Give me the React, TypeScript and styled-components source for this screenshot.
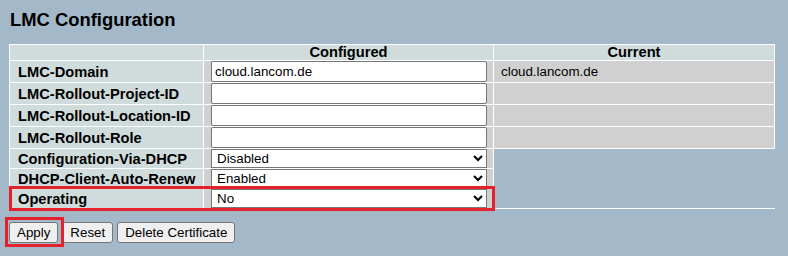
import styled, { createGlobalStyle } from "styled-components";

const GlobalStyle = createGlobalStyle`
  html, body {
    margin: 0;
    padding: 0;
    background-color: #a3b9c9;
    font-family: "Liberation Sans", Arial, sans-serif;
    color: #000;
  }
`;

const Page = styled.div`
  padding-top: 9px;
  width: 788px;
  height: 256px;
  box-sizing: border-box;
`;

const Title = styled.h1`
  margin: 0 0 14px 10px;
  font-size: 18.4px;
  line-height: 21px;
  font-weight: bold;
`;

const ConfigTable = styled.table`
  margin-left: 9px;
  border-collapse: collapse;
  width: 766px;
  table-layout: fixed;
  font-size: 14.67px;
`;

const HeadCell = styled.th`
  background-color: #d0dcdc;
  border: 1px solid #fff;
  height: 15px;
  padding: 0;
  font-weight: bold;
  line-height: 15px;
  text-align: center;
`;

const LabelCell = styled.td`
  position: relative;
  background-color: #d0dcdc;
  border: 1px solid #fff;
  padding: 0 0 0 8px;
  font-weight: bold;
  line-height: 16px;
  white-space: nowrap;
`;

const ValueCell = styled.td<{ $tall?: boolean }>`
  background-color: #d0d0d0;
  border: 1px solid #fff;
  padding: 0 0 0 7px;
  height: ${(p) => (p.$tall ? "21px" : "19px")};
  font-size: 13.33px;
  line-height: 15px;
  vertical-align: middle;
`;

const EmptyCell = styled.td<{ $last?: boolean }>`
  border: none;
  border-bottom: ${(p) => (p.$last ? "1px solid #fff" : "none")};
  padding: 0;
`;

const TextInput = styled.input`
  display: block;
  box-sizing: border-box;
  width: 276px;
  height: 21px;
  margin: 0;
  padding: 0 3px;
  border: 1px solid #767676;
  border-radius: 2px;
  background: #fff;
  font-family: "Liberation Sans", Arial, sans-serif;
  font-size: 13.33px;
  color: #000;
`;

const Select = styled.select`
  display: block;
  box-sizing: border-box;
  width: 276px;
  height: 19px;
  margin: 0;
  padding: 0 1px;
  border: 1px solid #767676;
  border-radius: 0;
  background-color: #fff;
  font-family: "Liberation Sans", Arial, sans-serif;
  font-size: 13.33px;
  color: #000;
`;

const Highlight = styled.span<{ $w: number; $h: number; $t: number; $l: number }>`
  position: absolute;
  left: ${(p) => p.$l}px;
  top: ${(p) => p.$t}px;
  width: ${(p) => p.$w}px;
  height: ${(p) => p.$h}px;
  box-sizing: border-box;
  border: 3px solid #e5222b;
  pointer-events: none;
`;

const ButtonBar = styled.div`
  display: flex;
  gap: 4px;
  margin: 13px 0 0 9px;
`;

const ButtonWrap = styled.span`
  position: relative;
  display: inline-flex;
`;

const Button = styled.button`
  height: 21px;
  padding: 0 7px;
  border: 1px solid #767676;
  border-radius: 3px;
  background-color: #efefef;
  font-family: "Liberation Sans", Arial, sans-serif;
  font-size: 13.33px;
  color: #000;
`;

const textRows = [
  { label: "LMC-Domain", value: "cloud.lancom.de", current: "cloud.lancom.de" },
  { label: "LMC-Rollout-Project-ID", value: "", current: "" },
  { label: "LMC-Rollout-Location-ID", value: "", current: "" },
  { label: "LMC-Rollout-Role", value: "", current: "" },
];

const selectRows = [
  { label: "Configuration-Via-DHCP", value: "Disabled", options: ["Disabled", "Enabled"] },
  { label: "DHCP-Client-Auto-Renew", value: "Enabled", options: ["Disabled", "Enabled"] },
  { label: "Operating", value: "No", options: ["No", "Yes"], marked: true },
];

export default function App() {
  return (
    <>
      <GlobalStyle />
      <Page>
        <Title>LMC Configuration</Title>
        <ConfigTable>
          <colgroup>
            <col style={{ width: 194 }} />
            <col style={{ width: 290 }} />
            <col />
          </colgroup>
          <thead>
            <tr>
              <HeadCell />
              <HeadCell>Configured</HeadCell>
              <HeadCell>Current</HeadCell>
            </tr>
          </thead>
          <tbody>
            {textRows.map((r) => (
              <tr key={r.label}>
                <LabelCell>{r.label}</LabelCell>
                <ValueCell $tall>
                  <TextInput type="text" defaultValue={r.value} />
                </ValueCell>
                <ValueCell $tall>{r.current}</ValueCell>
              </tr>
            ))}
            {selectRows.map((r, i) => (
              <tr key={r.label}>
                <LabelCell>
                  {r.label}
                  {r.marked && <Highlight $l={-1} $t={-3} $w={486} $h={25} />}
                </LabelCell>
                <ValueCell>
                  <Select defaultValue={r.value}>
                    {r.options.map((o) => (
                      <option key={o}>{o}</option>
                    ))}
                  </Select>
                </ValueCell>
                <EmptyCell $last={i === selectRows.length - 1} />
              </tr>
            ))}
          </tbody>
        </ConfigTable>
        <ButtonBar>
          <ButtonWrap>
            <Button>Apply</Button>
            <Highlight $l={-4} $t={-5} $w={59} $h={30} />
          </ButtonWrap>
          <Button>Reset</Button>
          <Button>Delete Certificate</Button>
        </ButtonBar>
      </Page>
    </>
  );
}
